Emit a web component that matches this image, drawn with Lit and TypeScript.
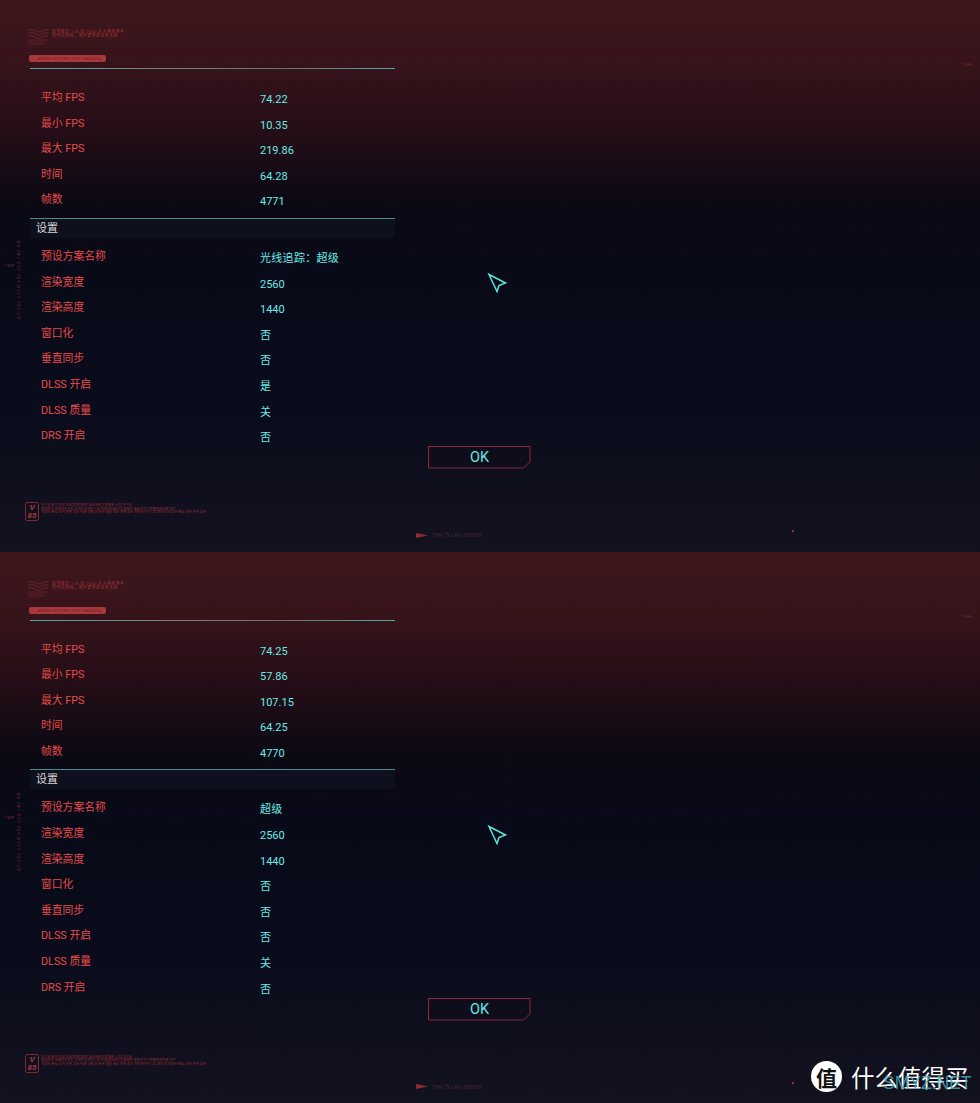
import { LitElement, html, css, svg } from "lit";
import { customElement, property } from "lit/decorators.js";

type Row = [string, string];
interface Report { stats: Row[]; settings: Row[] }

const reports: Report[] = [
  {
    stats: [["平均 FPS", "74.22"], ["最小 FPS", "10.35"], ["最大 FPS", "219.86"], ["时间", "64.28"], ["帧数", "4771"]],
    settings: [["预设方案名称", "光线追踪：超级"], ["渲染宽度", "2560"], ["渲染高度", "1440"], ["窗口化", "否"], ["垂直同步", "否"], ["DLSS 开启", "是"], ["DLSS 质量", "关"], ["DRS 开启", "否"]],
  },
  {
    stats: [["平均 FPS", "74.25"], ["最小 FPS", "57.86"], ["最大 FPS", "107.15"], ["时间", "64.25"], ["帧数", "4770"]],
    settings: [["预设方案名称", "超级"], ["渲染宽度", "2560"], ["渲染高度", "1440"], ["窗口化", "否"], ["垂直同步", "否"], ["DLSS 开启", "否"], ["DLSS 质量", "关"], ["DRS 开启", "否"]],
  },
];

@customElement("bench-panel")
class BenchPanel extends LitElement {
  @property({ attribute: false }) report!: Report;

  static styles = css`
    :host { display: block; }
    .panel {
      position: relative; height: 551.5px; box-sizing: border-box; overflow: hidden;
      padding: 29px 0 0 30px;
      font-family: "Roboto", "Noto Sans CJK SC", sans-serif;
      background:
        repeating-linear-gradient(0deg, rgba(255,255,255,.005) 0 1px, transparent 1px 9px),
        repeating-linear-gradient(90deg, rgba(255,255,255,.004) 0 1px, transparent 1px 9px),
        linear-gradient(180deg, #3d161b 0%, #38141a 10%, #280e17 22%, #160b14 31%, #0a0914 37%, #090a18 50%, #0b0c1b 75%, #12121f 100%);
    }
    .brand { display: flex; gap: 4px; margin-left: -2px; height: 26px; }
    .logo { width: 20px; height: 16px; display: block; }
    .notice { font-size: 4px; line-height: 4.4px; color: #a33238; width: 78px; padding-top: 1px; letter-spacing: .4px; white-space: nowrap; }
    .pill {
      width: 77px; height: 7px; margin-left: -1px; border-radius: 2px; background: #a8383b;
      font-size: 4px; line-height: 7px; color: #6e1c22; white-space: nowrap; overflow: hidden; padding-left: 9px; box-sizing: border-box;
    }
    .rule { width: 365px; height: 1px; margin-top: 6px; background: linear-gradient(90deg, #4fa6a4, #7a7f83 40%, #6b6f72 70%, #57a7a6); }
    .list { margin: 20px 0 0 11px; }
    .list.second { margin-top: 10px; }
    .row { height: 25.6px; display: grid; grid-template-columns: 219px 1fr; }
    .label { color: #e44c4a; font-size: 10.8px; line-height: 16px; padding-top: 1px; white-space: nowrap; }
    .value { color: #6aeae6; font-size: 11px; line-height: 16px; padding-top: 3px; white-space: nowrap; }
    .value.wide { letter-spacing: .3px; }
    .section {
      width: 365px; height: 20px; margin-top: 1px; box-sizing: border-box; padding: 2px 0 0 6px;
      border-top: 1px solid #4a8a8e; background: #0e101d;
      color: #d6d6d6; font-size: 11px; line-height: 16px;
    }
    .ok { display: block; position: relative; width: 103px; height: 23px; margin: -6.7px 0 0 398px; }
    .ok svg { display: block; }
    .ok span {
      position: absolute; inset: 0; display: flex; align-items: center; justify-content: center;
      color: #66e8e4; font-size: 14.5px;
    }
    .foot { display: flex; gap: 2px; margin: 33px 0 0 -5px; height: 20px; }
    .badge {
      width: 14px; height: 19px; box-sizing: border-box; border: 1px solid #7c2a30; border-radius: 2px;
      color: #a8383b; font-size: 8px; line-height: 8px; text-align: center; font-style: italic; font-weight: 700; padding-top: 1px;
    }
    .fine { font-size: 3.2px; line-height: 3.7px; color: #8f2a34; width: 180px; padding-top: 2px; white-space: nowrap; }
    .tag { position: absolute; left: 416px; top: 532px; display: flex; align-items: center; gap: 4px; color: #4b2531; font-size: 5px; line-height: 6px; letter-spacing: .2px; }
    .tick { position: absolute; color: #8a2c33; font-size: 4px; line-height: 4px; letter-spacing: 1px; }
    .right { left: 962px; top: 63px; }
    .mark { left: 5px; top: 264px; }
    .vert { position: absolute; left: 16px; top: 241px; writing-mode: vertical-rl; color: #7a2730; font-size: 4px; line-height: 4px; letter-spacing: 1px; white-space: nowrap; }
    .dot { position: absolute; left: 792px; top: 530px; width: 2px; height: 2px; background: #a02a30; }
    .cursor { position: absolute; left: 487px; top: 272px; }
  `;

  private rows(rows: Row[]) {
    return rows.map(([l, v]) => html`<div class="row"><div class="label">${l}</div><div class="value ${/[^\x00-\x7f]/.test(v) ? "wide" : ""}">${v}</div></div>`);
  }

  render() {
    const r = this.report;
    return html`<div class="panel">
      <div class="brand">
        <svg class="logo" viewBox="0 0 20 16" fill="none" stroke="#7d2a34" stroke-width=".7">
          <path d="M0 1h6l3 2h4l2-2h5M0 4h7l2 2h4l3-2h4M0 7h5l3 2h5l3-2h4" />
          <path d="M0 11h20M0 13h15M0 15h18" stroke-dasharray="2 .6" />
        </svg>
        <div class="notice">此项报告 176 张 2020 主义系统参考<br />仅作比较用，请不要重新发布本报</div>
      </div>
      <div class="pill">BENCH 2077 GPU 1920 1080 DATA</div>
      <div class="rule"></div>
      <div class="list">${this.rows(r.stats)}</div>
      <div class="section">设置</div>
      <div class="list second">${this.rows(r.settings)}</div>
      <div class="ok">
        <svg width="103" height="23" fill="#0d0d1c" stroke="#8b2b3a" stroke-width="1">
          <path d="M.5 .5H102V15.5L95.5 22H.5Z" />
        </svg>
        <span>OK</span>
      </div>
      <div class="foot">
        <div class="badge">V<br />85</div>
        <div class="fine">本产品 数字 版本 内容受版权保护 未经授权不得复制 分发 本产品<br />版权所有 保留所有权利 本软件及相关文档 均受国际条约法律保护 未经许可不得使用及传播 本产<br />本报告 数据 仅供 参考 实际 性能 可能 因 硬件 配置 驱动 系统 版本 而有所不同 以实测为准 本报告 数据 仅供 参考 实际</div>
      </div>
      <div class="tag">
        <svg width="12" height="5" viewBox="0 0 12 5">${svg`<path d="M0 0L12 2.5L0 5Z" fill="#8f2a34" />`}</svg>
        <span>TRN_TLCAS_B00000</span>
      </div>
      <div class="tick right">*DB</div>
      <div class="tick mark">*DP</div>
      <div class="vert">B8 1B7 E9C 1E1 D1C9 1E9 CP</div>
      <div class="dot"></div>
      <svg class="cursor" width="22" height="22" viewBox="0 0 22 22" fill="none" stroke="#5fe3da" stroke-width="1.5">
        <path d="M2 2.5L18.5 11L12 13.5L10 19.5Z" stroke-linejoin="miter" />
      </svg>
    </div>`;
  }
}

@customElement("app-root")
class AppRoot extends LitElement {
  static styles = css`
    :host { display: block; position: relative; width: 980px; height: 1103px; overflow: hidden; background: #07081a; }
    .wm { position: absolute; left: 811px; top: 1061px; display: flex; align-items: center; gap: 9px; color: #fff; font-family: "Noto Sans CJK SC", sans-serif; font-size: 23.5px; line-height: 30px; white-space: nowrap; }
    .seal { width: 31px; height: 31px; border-radius: 50%; background: #fff; color: #111; display: flex; align-items: center; justify-content: center; font-size: 21px; font-weight: 700; }
    .site { position: absolute; left: 883px; top: 1073px; color: rgba(70,170,185,.85); font-family: "Liberation Sans", sans-serif; font-size: 17.5px; line-height: 20px; }
  `;
  render() {
    return html`
      ${reports.map((r) => html`<bench-panel .report=${r}></bench-panel>`)}
      <div class="wm"><span class="seal">值</span><span>什么值得买</span></div>
      <div class="site">SMYZ.NET</div>
    `;
  }
}
